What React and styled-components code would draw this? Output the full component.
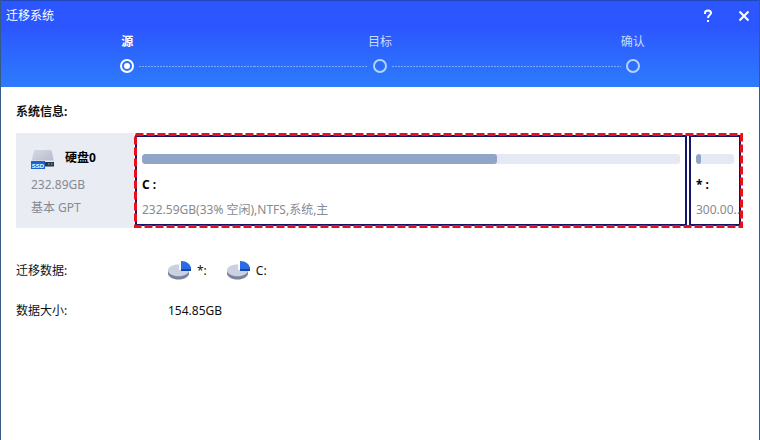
import React from 'react';
import styled, { createGlobalStyle } from 'styled-components';

const GlobalStyle = createGlobalStyle`
    * { box-sizing: border-box; }

    body {
        margin: 0;
        background: #fff;
        color: #111;
        font: 12px/16px "Noto Sans", "Noto Sans CJK SC", sans-serif;
    }
`;

const Window = styled.div`
    display: flex;
    flex-direction: column;
    min-height: 100vh;
    border: solid #355b85;
    border-width: 0 1px;
    background: #fff;
`;

const Header = styled.header`
    padding-bottom: 14px;
    border-top: 1px solid #1f48b8;
    background: linear-gradient(#2c56ff 30%, #2c7cfc);
    color: #fff;
`;

const TitleBar = styled.div`
    display: flex;
    align-items: center;
    justify-content: space-between;
    height: 30px;
    padding: 0 5px;
`;

const Title = styled.h1`
    margin: 0;
    font-size: 12px;
    font-weight: 400;
`;

const Controls = styled.div`
    display: flex;
    gap: 16px;
`;

const IconButton = styled.button`
    display: flex;
    align-items: center;
    justify-content: center;
    width: 20px;
    height: 20px;
    padding: 0;
    border: 0;
    background: none;
    color: #fff;
    cursor: pointer;
`;

const Steps = styled.ol`
    display: grid;
    grid-template-columns: repeat(3, 1fr);
    margin: 0;
    padding: 0;
    list-style: none;
`;

const Step = styled.li`
    display: flex;
    flex-direction: column;
    gap: 9px;
    padding-top: 3px;
    text-align: center;
    color: ${props => props.$active ? '#fff' : '#c9dcff'};
    font-weight: ${props => props.$active ? 700 : 400};
`;

const Track = styled.div`
    display: flex;
    align-items: center;
    height: 14px;
`;

const Line = styled.span`
    flex: 1;
    height: 1px;
    background: repeating-linear-gradient(90deg, #7fa8ff 0 2px, transparent 2px 3px);
    visibility: ${props => props.$hidden ? 'hidden' : 'visible'};
`;

const Dot = styled.span`
    display: grid;
    place-items: center;
    width: 14px;
    height: 14px;
    margin: 0 5px;
    border: 2px solid ${props => props.$active ? '#fff' : '#b5d3ff'};
    border-radius: 50%;

    &::after {
        content: "";
        width: 6px;
        height: 6px;
        border-radius: 50%;
        background: ${props => props.$active ? '#fff' : 'transparent'};
    }
`;

const Content = styled.main`
    padding: 17px 16px 16px 15px;
`;

const SectionTitle = styled.h2`
    margin: 0 0 13px;
    font-size: 12px;
    line-height: 16px;
    font-weight: 700;
`;

const Disk = styled.section`
    display: flex;
    margin-bottom: 33px;
`;

const DiskInfo = styled.div`
    flex: none;
    width: 118px;
    height: 95px;
    padding: 14px 15px 0;
    background: #e9ecf3;
    color: #868a92;
`;

const DiskName = styled.div`
    display: flex;
    align-items: center;
    gap: 10px;
    height: 22px;
    margin-bottom: 8px;
    color: #000;
    font-size: 12px;
    font-weight: 700;
`;

const DiskDetail = styled.div`
    margin-bottom: 7px;
`;

const Partitions = styled.div`
    position: relative;
    display: flex;
    flex: 1;
    gap: 2px;
    min-width: 0;
    padding: 2px 2px 2px 1px;
`;

const Highlight = styled.svg`
    position: absolute;
    top: 0;
    left: 0;
    width: calc(100% - 3px);
    height: calc(100% - 3px);
    overflow: visible;
    pointer-events: none;
`;

const Partition = styled.div`
    flex: ${props => props.$small ? '0 0 52px' : '1'};
    min-width: 0;
    padding: 17px 5px 0;
    border: 2px solid #14146a;
`;

const Usage = styled.div`
    height: 10px;
    border-radius: 3px;
    background: #e4e9f4;
    overflow: hidden;
`;

const UsageFill = styled.div`
    height: 100%;
    border-radius: 3px;
    background: #91a5c8;
`;

const PartitionName = styled.div`
    margin: 13px 0 9px;
    color: #000;
    font-weight: 700;
`;

const PartitionDetail = styled.div`
    color: #868a92;
    white-space: nowrap;
`;

const Summary = styled.dl`
    display: grid;
    grid-template-columns: 152px 1fr;
    grid-auto-rows: 20px;
    row-gap: 20px;
    margin: 0;
`;

const Label = styled.dt`
    line-height: 20px;
`;

const Value = styled.dd`
    display: flex;
    gap: 20px;
    margin: 0;
    line-height: 20px;
`;

const Volume = styled.span`
    display: flex;
    align-items: center;
    gap: 5px;
`;

const steps = ['源', '目标', '确认'];

const partitions = [
    { name: 'C :', detail: '232.59GB(33% 空闲),NTFS,系统,主', used: 66 },
    { name: '* :', detail: '300.00...', used: 13, small: true },
];

const volumes = ['*:', 'C:'];

const DiskIcon = () => (
    <svg width="24" height="22" viewBox="0 0 24 22" aria-hidden="true">
        <defs>
            <linearGradient id="diskTop" x1="0" y1="0" x2="1" y2="1">
                <stop offset="0" stopColor="#d5d9e3" />
                <stop offset="1" stopColor="#b4bac9" />
            </linearGradient>
        </defs>
        <path d="M4.500 3h14.500q1.500 0 1.900 1.500L23 15H0.500L2.700 4.500Q3.100 3 4.500 3z" fill="url(#diskTop)" />
        <path d="M0.500 13.500h22.500v1.500H0.500z" fill="#e8ebf2" />
        <path d="M13 15h10v4.500H13z" fill="#29344f" />
        <path d="M17 17h1.500M20 17h1.500" stroke="#a9b6d2" />
        <rect x="0" y="14" width="14" height="8" fill="#1b63d2" />
        <text x="7" y="20.500" textAnchor="middle" fontFamily="Liberation Sans" fontSize="6" fontWeight="700" fill="#fff">SSD</text>
    </svg>
);

const PieIcon = () => (
    <svg width="24" height="20" viewBox="0 0 24 20" aria-hidden="true">
        <path d="M0 9v3.500c0 3.300 4.700 6 10.500 6S21 15.800 21 12.500V9z" fill="#79839b" />
        <path d="M11 3.500C5 3.200 0 5.700 0 9.300c0 3.400 4.700 6 10.500 6S21 12.700 21 9.500L11 9z" fill="#cbd1e0" />
        <path d="M13 8v2h10V6z" fill="#1746a8" />
        <path d="M13 0c5.500 0 10 3 10 8H13z" fill="#2b6be6" />
        <path d="M11.500 2V9" stroke="#f4f6fa" />
    </svg>
);

const App = () => {
    return (
        <Window>
            <GlobalStyle />

            <Header>
                <TitleBar>
                    <Title>迁移系统</Title>
                    <Controls>
                        <IconButton aria-label="帮助">
                            <svg width="12" height="14" viewBox="0 0 12 14" fill="none" stroke="currentColor" strokeWidth="2">
                                <path d="M3 5V4a3 2.500 0 0 1 6 0c0 2-3 2-3 5M6 11v2" />
                            </svg>
                        </IconButton>
                        <IconButton aria-label="关闭">
                            <svg width="12" height="12" viewBox="0 0 12 12" fill="none" stroke="currentColor" strokeWidth="2">
                                <path d="M1.500 1.500l9 9M10.500 1.500l-9 9" />
                            </svg>
                        </IconButton>
                    </Controls>
                </TitleBar>

                <Steps>
                    { steps.map( (step, key) => (
                        <Step key={key} $active={key === 0}>
                            {step}
                            <Track>
                                <Line $hidden={key === 0} />
                                <Dot $active={key === 0} />
                                <Line $hidden={key === steps.length - 1} />
                            </Track>
                        </Step>
                    ))}
                </Steps>
            </Header>

            <Content>
                <SectionTitle>系统信息:</SectionTitle>

                <Disk>
                    <DiskInfo>
                        <DiskName><DiskIcon />硬盘0</DiskName>
                        <DiskDetail>232.89GB</DiskDetail>
                        <DiskDetail>基本 GPT</DiskDetail>
                    </DiskInfo>

                    <Partitions>
                        { partitions.map( (partition, key) => (
                            <Partition key={key} $small={partition.small}>
                                <Usage>
                                    <UsageFill style={{ width: `${partition.used}%` }} />
                                </Usage>
                                <PartitionName>{partition.name}</PartitionName>
                                <PartitionDetail>{partition.detail}</PartitionDetail>
                            </Partition>
                        ))}
                        <Highlight aria-hidden="true">
                            <rect x="1.500" y="1.500" width="100%" height="100%" fill="none" stroke="#e8101a" strokeWidth="3" strokeDasharray="8 3" />
                        </Highlight>
                    </Partitions>
                </Disk>

                <Summary>
                    <Label>迁移数据:</Label>
                    <Value>
                        { volumes.map( (volume, key) => (
                            <Volume key={key}><PieIcon />{volume}</Volume>
                        ))}
                    </Value>
                    <Label>数据大小:</Label>
                    <Value>154.85GB</Value>
                </Summary>
            </Content>
        </Window>
    );
};

export default App;
